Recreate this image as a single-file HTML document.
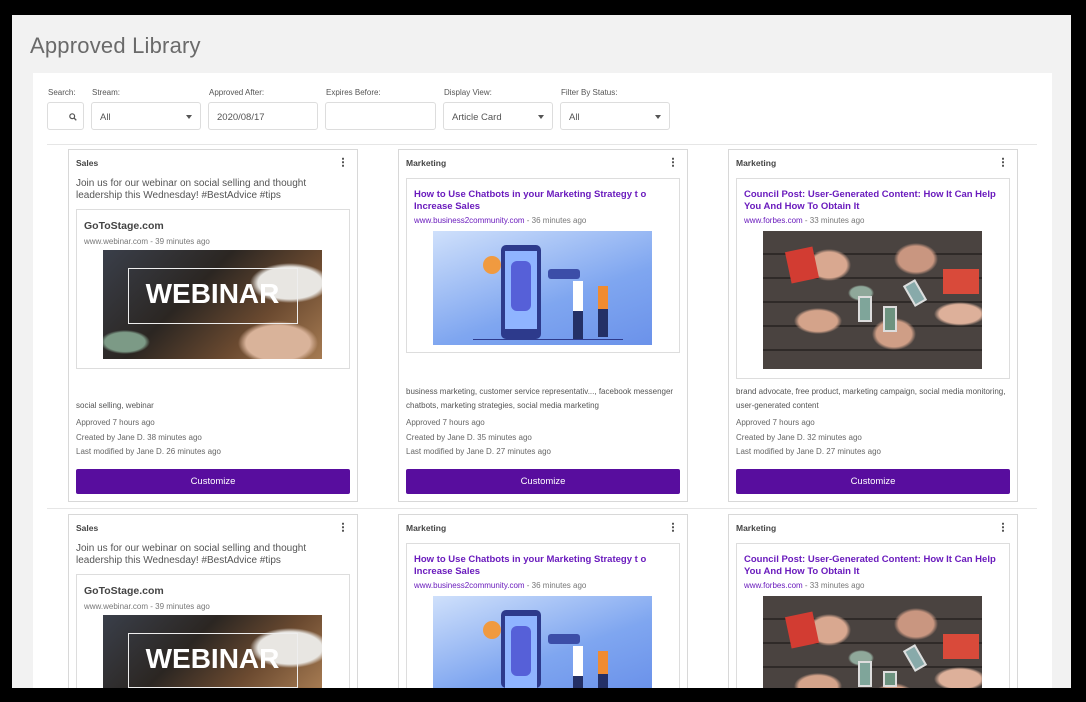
<!DOCTYPE html>
<html><head><meta charset="utf-8">
<style>
*{margin:0;padding:0;box-sizing:border-box}
html,body{width:1086px;height:702px;overflow:hidden}
body{background:#000;position:relative;font-family:"Liberation Sans",sans-serif;color:#555}
.win{position:absolute;left:12px;top:15px;width:1059px;height:673px;background:#f2f2f2;overflow:hidden}
.clip{position:absolute;left:0;top:0;width:1071px;height:688px;overflow:hidden}
.title{position:absolute;left:18px;top:18px;font-size:22px;color:#6a6a6a;font-weight:300;letter-spacing:.2px}
.panel{position:absolute;left:21px;top:58px;width:1019px;height:615px;background:#fff}
.lbl{position:absolute;top:15px;font-size:8px;color:#555}
.inp{position:absolute;top:29px;height:28px;border:1px solid #ddd;border-radius:3px;background:#fff;font-size:9.5px;color:#555;padding:9px 8px}
.inp .car{position:absolute;right:8px;top:12px;width:0;height:0;border-left:3px solid transparent;border-right:3px solid transparent;border-top:4px solid #555}
.sep{position:absolute;left:14px;width:990px;height:1px;background:#e6e6e6}
.card{position:absolute;width:290px;height:353px;border:1px solid #d8d8d8;background:#fff;overflow:hidden}
.card.r2{height:174px;border-bottom:none}
.r2 .pv{border-bottom:none}
.card>*,.pv>*,.img>*{position:absolute}
.cat{left:7px;top:8px;font-size:8.5px;font-weight:bold;color:#444}
.keb{right:13px;top:7px;width:2px;height:10px;background:radial-gradient(circle,#555 1px,transparent 1.2px) 0 0/2px 3.5px}
.msg{left:7px;top:28px;font-size:10px;line-height:12px;color:#555;width:270px}
.pv{left:7px;width:274px;border:1px solid #ddd}
.pt{left:7px;font-size:9.5px;font-weight:bold;color:#6a1bbd;line-height:12px;width:264px}
.pu{left:7px;font-size:8px;color:#777;white-space:nowrap}
.pu b{font-weight:normal;color:#6a1bbd}
.img{left:34px;width:219px;overflow:hidden}
.tag{left:7px;font-size:8px;color:#555;line-height:14px;width:276px}
.meta{left:7px;font-size:8px;color:#666;line-height:14.5px}
.btn{left:7px;top:319px;width:274px;height:25px;background:#580d9e;border-radius:2px;color:#fff;font-size:9.5px;text-align:center;line-height:25px}
</style></head><body>
<div class="win">
<div class="title">Approved Library</div>
<div class="panel">
 <div class="lbl" style="left:15px">Search:</div>
 <div class="inp" style="left:14px;width:37px"><svg style="position:absolute;left:21px;top:10px" width="8" height="8" viewBox="0 0 8 8"><circle cx="3.2" cy="3.2" r="2.4" fill="none" stroke="#555" stroke-width="1.2"/><path d="M5 5L7.3 7.3" stroke="#555" stroke-width="1.3"/></svg></div>
 <div class="lbl" style="left:59px">Stream:</div>
 <div class="inp" style="left:58px;width:110px">All<span class="car"></span></div>
 <div class="lbl" style="left:176px">Approved After:</div>
 <div class="inp" style="left:175px;width:110px">2020/08/17</div>
 <div class="lbl" style="left:293px">Expires Before:</div>
 <div class="inp" style="left:292px;width:111px"></div>
 <div class="lbl" style="left:411px">Display View:</div>
 <div class="inp" style="left:410px;width:110px">Article Card<span class="car"></span></div>
 <div class="lbl" style="left:528px">Filter By Status:</div>
 <div class="inp" style="left:527px;width:110px">All<span class="car"></span></div>
 <div class="sep" style="top:71px"></div>
 <div class="sep" style="top:435px"></div>
</div>
</div>

<div class="clip" id="cards"></div>

<script>
function hh(h,top,r2){return r2?Math.min(h,173-top):h;}
const webinar=(r2)=>`<div class="img" style="top:100px;height:${hh(109,100,r2)}px;background:linear-gradient(135deg,#3a3f4a 0%,#2b2622 40%,#6b4a30 70%,#a67b52 100%)">
<div style="left:0;top:0;width:219px;height:${hh(109,100,r2)}px;background:radial-gradient(ellipse 40px 20px at 187px 33px,#e8e6e2 0 80%,transparent 100%),radial-gradient(ellipse 40px 22px at 175px 93px,#d9b39a 0 80%,transparent 100%),radial-gradient(ellipse 25px 12px at 22px 92px,#7c9a86 0 80%,transparent 100%)"></div>
<div style="left:25px;top:18px;width:170px;height:${r2?55:56}px;border:1.5px solid #eee"></div>
<div style="left:0;top:28px;width:219px;text-align:center;color:#fff;font-size:28px;font-weight:bold;letter-spacing:0">WEBINAR</div></div>`;
const chatbot=(r2)=>`<div class="img" style="top:81px;height:${hh(114,81,r2)}px;background:linear-gradient(160deg,#cfe0fb,#7fa6f0 60%,#6b92ea)">
<div style="left:68px;top:14px;width:40px;height:${r2?78:94}px;background:#2d3a8c;border-radius:5px"></div>
<div style="left:72px;top:20px;width:32px;height:${r2?72:78}px;background:#8fb4ff"></div>
<div style="left:78px;top:30px;width:20px;height:50px;background:#5660d8;border-radius:6px"></div>
<div style="left:50px;top:25px;width:18px;height:18px;border-radius:50%;background:#f09a40"></div>
<div style="left:115px;top:38px;width:32px;height:10px;background:#3c4ea8;border-radius:3px"></div>
<div style="left:140px;top:50px;width:10px;height:30px;background:#fff"></div>
<div style="left:140px;top:80px;width:10px;height:${r2?12:28}px;background:#243066"></div>
<div style="left:165px;top:55px;width:10px;height:25px;background:#f08b30"></div>
<div style="left:165px;top:78px;width:10px;height:${r2?14:28}px;background:#243066"></div>
${r2?'':'<div style="left:40px;top:108px;width:150px;height:1px;background:#2d3a8c"></div>'}</div>`;
const phones=(r2)=>`<div class="img" style="top:81px;height:${hh(138,81,r2)}px;background:repeating-linear-gradient(180deg,#4a4340 0 22px,#2f2a28 22px 24px)">
<div style="left:0;top:0;width:219px;height:${hh(138,81,r2)}px;background:radial-gradient(ellipse 22px 16px at 66px 34px,#d9a890 0 80%,transparent 100%),radial-gradient(ellipse 22px 16px at 153px 28px,#c99680 0 80%,transparent 100%),radial-gradient(ellipse 24px 13px at 55px 90px,#d4a38a 0 80%,transparent 100%),radial-gradient(ellipse 22px 16px at 131px 103px,#cf9e86 0 80%,transparent 100%),radial-gradient(ellipse 26px 12px at 197px 83px,#ddb09a 0 80%,transparent 100%),radial-gradient(ellipse 13px 8px at 98px 62px,#8fa89a 0 80%,transparent 100%)"></div>
<div style="left:25px;top:18px;width:28px;height:32px;background:#d23c32;transform:rotate(-12deg)"></div>
<div style="left:180px;top:38px;width:36px;height:25px;background:#d94a3a"></div>
<div style="left:95px;top:65px;width:14px;height:26px;background:#7fa59a;border:2px solid #ddd"></div>
<div style="left:120px;top:75px;width:14px;height:${r2?16:26}px;background:#6d9380;border:2px solid #ddd"></div>
<div style="left:145px;top:50px;width:14px;height:24px;background:#8aa;border:2px solid #ddd;transform:rotate(-30deg)"></div></div>`;
function card(x,y,kind,r2){
 let h=`<div class="card${r2?' r2':''}" style="left:${x}px;top:${y}px"><div class="cat">${kind==0?'Sales':'Marketing'}</div><div class="keb"></div>`;
 if(kind==0){
  h+=`<div class="msg">Join us for our webinar on social selling and thought leadership this Wednesday! #BestAdvice #tips</div>
  <div class="pv" style="top:59px;height:${hh(160,59,r2)}px"><div class="pt" style="top:10px;font-size:10.5px;color:#444">GoToStage.com</div><div class="pu" style="top:27px">www.webinar.com - 39 minutes ago</div></div>${webinar(r2)}`;
  if(!r2)h+=`<div class="tag" style="top:249px">social selling, webinar</div>
  <div class="meta" style="top:266px">Approved 7 hours ago<br>Created by Jane D. 38 minutes ago<br>Last modified by Jane D. 26 minutes ago</div>`;
 } else if(kind==1){
  h+=`<div class="pv" style="top:28px;height:${hh(175,28,r2)}px"><div class="pt" style="top:10px">How to Use Chatbots in your Marketing Strategy t o Increase Sales</div><div class="pu" style="top:37px"><b>www.business2community.com</b> - 36 minutes ago</div></div>${chatbot(r2)}`;
  if(!r2)h+=`<div class="tag" style="top:235px">business marketing, customer service representativ..., facebook messenger chatbots, marketing strategies, social media marketing</div>
  <div class="meta" style="top:266px">Approved 7 hours ago<br>Created by Jane D. 35 minutes ago<br>Last modified by Jane D. 27 minutes ago</div>`;
 } else {
  h+=`<div class="pv" style="top:28px;height:${hh(201,28,r2)}px"><div class="pt" style="top:10px">Council Post: User-Generated Content: How It Can Help You And How To Obtain It</div><div class="pu" style="top:37px"><b>www.forbes.com</b> - 33 minutes ago</div></div>${phones(r2)}`;
  if(!r2)h+=`<div class="tag" style="top:235px">brand advocate, free product, marketing campaign, social media monitoring, user-generated content</div>
  <div class="meta" style="top:266px">Approved 7 hours ago<br>Created by Jane D. 32 minutes ago<br>Last modified by Jane D. 27 minutes ago</div>`;
 }
 if(!r2)h+=`<div class="btn">Customize</div>`;
 h+=`</div>`;
 return h;
}
let s='';
s+=card(68,149,0,0)+card(398,149,1,0)+card(728,149,2,0);
s+=card(68,514,0,1)+card(398,514,1,1)+card(728,514,2,1);
document.getElementById('cards').innerHTML=s;
</script>
</body></html>
